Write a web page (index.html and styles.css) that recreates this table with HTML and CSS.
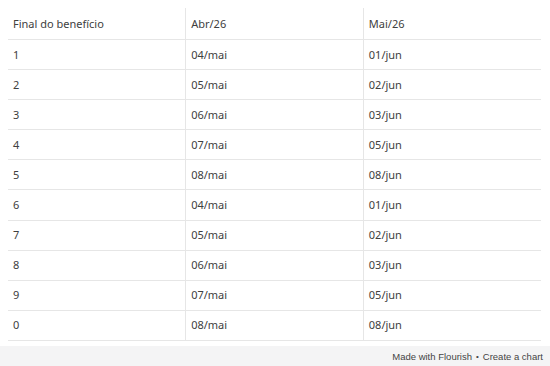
FILE: index.html
```html
<!DOCTYPE html>
<html lang="pt">
<head>
<meta charset="utf-8">
<link rel="stylesheet" href="styles.css">
</head>
<body>
<div class="page">
  <table class="tbl">
    <thead>
      <tr><th>Final do benefício</th><th>Abr/26</th><th>Mai/26</th></tr>
    </thead>
    <tbody>
      <tr><td>1</td><td>04/mai</td><td>01/jun</td></tr>
      <tr><td>2</td><td>05/mai</td><td>02/jun</td></tr>
      <tr><td>3</td><td>06/mai</td><td>03/jun</td></tr>
      <tr><td>4</td><td>07/mai</td><td>05/jun</td></tr>
      <tr><td>5</td><td>08/mai</td><td>08/jun</td></tr>
      <tr><td>6</td><td>04/mai</td><td>01/jun</td></tr>
      <tr><td>7</td><td>05/mai</td><td>02/jun</td></tr>
      <tr><td>8</td><td>06/mai</td><td>03/jun</td></tr>
      <tr><td>9</td><td>07/mai</td><td>05/jun</td></tr>
      <tr><td>0</td><td>08/mai</td><td>08/jun</td></tr>
    </tbody>
  </table>
</div>
<footer class="footer">
  <span>Made with Flourish</span><span class="dot">•</span><span>Create a chart</span>
</footer>
</body>
</html>
```
FILE: styles.css
```css
html, body {
  margin: 0;
  padding: 0;
  background: #fff;
}
body {
  width: 550px;
  height: 366px;
  overflow: hidden;
  font-family: "Noto Sans", "Open Sans", sans-serif;
  color: #333;
}
.page {
  padding: 8px 9px 0 8px;
  height: 338px;
}
.tbl {
  width: 533px;
  border-collapse: collapse;
  table-layout: fixed;
  font-size: 11px;
}
.tbl th, .tbl td {
  text-align: left;
  font-weight: 400;
  padding: 0 5px;
  border-bottom: 1px solid #e6e6e6;
  color: #404040;
}
.tbl th + th, .tbl td + td {
  border-left: 1px solid #e6e6e6;
}
.tbl th {
  height: 30px;
  padding-bottom: 1px;
}
.tbl td {
  height: 28.1px;
  padding-bottom: 1px;
}
.footer {
  height: 20px;
  background: #f4f4f5;
  display: flex;
  justify-content: flex-end;
  align-items: center;
  padding-right: 7px;
  font-family: "Liberation Sans", sans-serif;
  font-size: 9.5px;
  color: #444;
  gap: 4px;
}
.dot {
  font-size: 8px;
}
```
